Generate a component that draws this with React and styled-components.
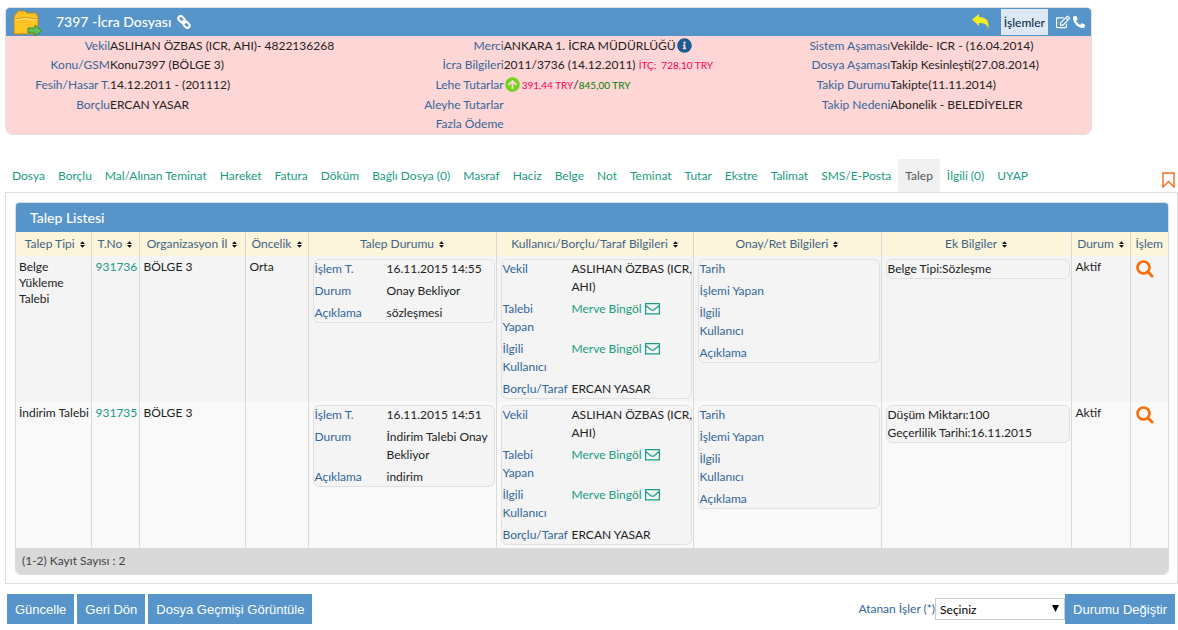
import styled, { createGlobalStyle } from "styled-components";
import { FaPhoneAlt, FaInfoCircle, FaArrowCircleUp, FaRegEdit } from "react-icons/fa";

const GlobalStyle = createGlobalStyle`
  * { box-sizing: border-box; }

  body {
    margin: 0;
    background: #fff;
    color: #222;
    font: 12px/18px Lato, "Noto Sans", sans-serif;
  }

  a {
    color: #1a9b82;
    text-decoration: none;
  }
`;

const Page = styled.div`
  padding: 7px 0 6px 5px;
`;

const CasePanel = styled.section`
  margin-right: 86px;
  border: 1px solid #e0e0e0;
  border-radius: 5px 5px 8px 8px;
  overflow: hidden;
  background: #ffd6d6;
`;

const CaseBar = styled.header`
  display: flex;
  align-items: center;
  height: 28px;
  padding: 0 6px;
  background: #5694ca;
  color: #fff;
`;

const CaseTitle = styled.h1`
  display: flex;
  align-items: center;
  gap: 6px;
  flex: 1;
  margin: 0 0 0 12px;
  font-size: 14px;
  font-weight: 500;
`;

const BarTools = styled.div`
  display: flex;
  align-items: center;
  gap: 3px;
`;

const IconButton = styled.button`
  display: flex;
  padding: 0;
  border: 0;
  background: none;
  color: #fff;
  cursor: pointer;
`;

const MenuButton = styled.button`
  height: 26px;
  margin: 0 5px 0 8px;
  padding: 0 3px;
  border: 0;
  background: #dce9f5;
  color: #12344f;
  font: 500 12px Lato, "Noto Sans", sans-serif;
`;

const CaseInfo = styled.div`
  display: grid;
  grid-template-columns: 394fr 387fr 305fr;
  min-height: 98px;
`;

const InfoList = styled.dl`
  display: grid;
  grid-template-columns: 104px 1fr;
  grid-template-rows: repeat(5, 1fr);
  align-items: center;
  margin: 0;
  white-space: nowrap;

  dt {
    color: #336699;
    text-align: right;
  }

  dd {
    display: flex;
    align-items: center;
    margin: 0;
  }

  svg { margin: 0 2px 0 1px; }
`;

const Amount = styled.span`
  color: ${({ $plus }) => ($plus ? "#008000" : "#ff0055")};
  font-size: 10px;
`;

const TabBar = styled.nav`
  display: flex;
  align-items: flex-end;
  justify-content: space-between;
  margin-top: 24px;
`;

const Tabs = styled.div`
  display: flex;
  gap: 1px;
  padding-left: 1px;
`;

const Tab = styled.a`
  padding: 8px ${({ $active }) => ($active ? 7 : 6)}px 7px;
  white-space: nowrap;
  ${({ $active }) => $active && "background: #f0f0f0; color: #555;"}
`;

const Bookmark = styled(IconButton)`
  margin: 0 3px 4px 0;
`;

const Content = styled.main`
  padding: 9px 8px 8px 9px;
  border: 1px solid #ddd;
`;

const ListPanel = styled.section`
  border: 1px solid #ddd;
  border-radius: 4px 4px 6px 6px;
  overflow: hidden;
`;

const ListTitle = styled.h2`
  margin: 0;
  padding: 0 14px;
  background: #5694ca;
  color: #fff;
  font-size: 14px;
  font-weight: 500;
  line-height: 29px;
`;

const Table = styled.table`
  width: 100%;
  table-layout: fixed;
  border-collapse: collapse;

  th, td {
    padding: 3px 1px 3px 4px;
    border-left: 1px solid #d9d9d9;
    vertical-align: top;
  }

  th {
    padding-left: 1px;
    background: #fcf5dc;
    color: #3f6484;
    font-weight: 400;
    text-align: center;
    white-space: nowrap;

    svg { margin-left: 2px; }
  }

  td { line-height: 16px; }

  th:first-child, td:first-child {
    padding-left: 3px;
    padding-right: 0;
    border-left: 0;
  }

  tbody tr:nth-child(odd) { background: #f4f4f4; }
  tbody tr:nth-child(even) { background: #f9f9f9; }
`;

const Count = styled.footer`
  padding: 4px 6px;
  background: #d9d9d9;
  color: #444;
`;

const Box = styled.div`
  display: grid;
  row-gap: 4px;
  padding: 0 1px;
  border: 1px solid #e0e0e0;
  border-radius: 6px;
  background: #f4f4f4;
  line-height: 18px;
`;

const Pair = styled.div`
  display: grid;
  grid-template-columns: ${({ $label }) => $label}px 1fr;
  white-space: pre;

  & > span:first-child { color: #336699; }
`;

const MailLink = styled.a`
  display: flex;
  align-items: center;
  gap: 3px;
  height: 18px;
`;

const Actions = styled.footer`
  display: flex;
  align-items: center;
  gap: 3px;
  padding: 10px 3px 0 2px;
`;

const Button = styled.button`
  height: 30px;
  padding: 0 8px;
  border: 0;
  background: #5694ca;
  color: #fff;
  font: 13px "Liberation Sans", Arial, sans-serif;
  white-space: nowrap;
`;

const Assign = styled.div`
  display: flex;
  align-items: center;
  margin-left: auto;

  label { color: #336699; }
`;

const SelectBox = styled.span`
  display: grid;
  align-items: center;

  select, svg { grid-area: 1 / 1; }

  svg {
    justify-self: end;
    margin-right: 6px;
    pointer-events: none;
  }

  select {
    width: 130px;
    height: 22px;
    padding: 0 4px;
    border: 1px solid #ccc;
    background: #fff;
    color: #000;
    font: 12px Lato, "Noto Sans", sans-serif;
    appearance: none;
  }
`;

const tabs = [
  "Dosya", "Borçlu", "Mal/Alınan Teminat", "Hareket", "Fatura", "Döküm", "Bağlı Dosya (0)",
  "Masraf", "Haciz", "Belge", "Not", "Teminat", "Tutar", "Ekstre", "Talimat", "SMS/E-Posta",
  "Talep", "İlgili (0)", "UYAP",
];

const columns = [
  ["Talep Tipi", 75], ["T.No", 48], ["Organizasyon İl", 106], ["Öncelik", 63],
  ["Talep Durumu", 188], ["Kullanıcı/Borçlu/Taraf Bilgileri", 197], ["Onay/Ret Bilgileri", 188],
  ["Ek Bilgiler", 190], ["Durum", 59], ["İşlem", 38],
];

const requests = [
  {
    no: "931736", type: "Belge Yükleme Talebi", region: "BÖLGE 3", priority: "Orta",
    date: "16.11.2015 14:55", status: "Onay Bekliyor", note: "sözleşmesi",
    extra: ["Belge Tipi:Sözleşme"],
  },
  {
    no: "931735", type: "İndirim Talebi", region: "BÖLGE 3", priority: "",
    date: "16.11.2015 14:51", status: "İndirim Talebi Onay\nBekliyor", note: "indirim",
    extra: ["Düşüm Miktarı:100", "Geçerlilik Tarihi:16.11.2015"],
  },
];

function FolderIcon() {
  return (
    <svg width="32" height="28" viewBox="0 0 32 28" aria-hidden="true">
      <path d="M2 26V9l2-4h1l1-2h7l2 2h9l2 4v17z" fill="#ffc423" stroke="#b98a1c" />
      <path d="M3 11q11-3 22 0" fill="none" stroke="#c9971f" />
      <path d="M3 12q11-3 22 0" fill="none" stroke="#ffe58a" />
      <path d="M16 20h7v-3l7 6-7 5v-3h-7z" fill="#63c058" stroke="#2f8c36" />
    </svg>
  );
}

function ChainIcon() {
  return (
    <svg width="14" height="14" viewBox="0 0 14 14" fill="none" stroke="#fff" strokeWidth="2" aria-hidden="true">
      <rect x="1" y="2" width="7" height="4.600" rx="2.300" transform="rotate(45 4.500 4.300)" />
      <rect x="6" y="7.400" width="7" height="4.600" rx="2.300" transform="rotate(45 9.500 9.700)" />
      <path d="M5.500 5.500l3 3" />
    </svg>
  );
}

function ReplyIcon() {
  return (
    <svg width="18" height="16" viewBox="0 0 18 16" aria-hidden="true">
      <path d="M0 5.500L7 0v3c7 0 11 4 9 12-.5-4-3-6-9-6v3z" fill="#f0ee1c" />
    </svg>
  );
}

function BookmarkIcon() {
  return (
    <svg width="13" height="16" viewBox="0 0 13 16" aria-hidden="true">
      <path d="M1 1h11v14l-5.500-5.500L1 15z" fill="none" stroke="#f76b1c" strokeWidth="1.400" />
    </svg>
  );
}

function MailIcon() {
  return (
    <svg width="15" height="12" viewBox="0 0 15 12" aria-hidden="true">
      <path d="M.6.6h13.800v10.300H.6zM.6 2.500l5.400 4.200q1.500 1 3 0l5.400-4.200" fill="none" stroke="#1a9b82" strokeWidth="1.200" />
    </svg>
  );
}

function SearchIcon() {
  return (
    <svg width="19" height="19" viewBox="0 0 19 19" aria-hidden="true">
      <circle cx="8.500" cy="8.500" r="6" fill="none" stroke="#f96d0b" strokeWidth="2.600" />
      <path d="M13 13l4 4" stroke="#f96d0b" strokeWidth="3" strokeLinecap="round" />
    </svg>
  );
}

function SortIcon() {
  return (
    <svg width="5" height="7" viewBox="0 0 6 8" aria-hidden="true">
      <path d="M0 3.500L3 0l3 3.500zM0 4.500h6L3 8z" fill="#111" />
    </svg>
  );
}

function Person() {
  return <MailLink href="#mail">Merve Bingöl<MailIcon /></MailLink>;
}

function Pairs({ label, items }) {
  return (
    <Box>
      {items.map(([name, value]) => (
        <Pair key={name} $label={label}>
          <span>{name}</span>
          <span>{value}</span>
        </Pair>
      ))}
    </Box>
  );
}

function Info({ items }) {
  return (
    <InfoList>
      {items.map(([name, value]) => [
        <dt key={name}>{name}</dt>,
        <dd key={name + "-value"}>{value}</dd>,
      ])}
    </InfoList>
  );
}

function Row({ item }) {
  return (
    <tr>
      <td>{item.type}</td>
      <td><a href={"#" + item.no}>{item.no}</a></td>
      <td>{item.region}</td>
      <td>{item.priority}</td>
      <td>
        <Pairs label={72} items={[["İşlem T.", item.date], ["Durum", item.status], ["Açıklama", item.note]]} />
      </td>
      <td>
        <Pairs
          label={69}
          items={[
            ["Vekil", "ASLIHAN ÖZBAS (ICR,\nAHI)"],
            ["Talebi\nYapan", <Person />],
            ["İlgili\nKullanıcı", <Person />],
            ["Borçlu/Taraf", "ERCAN YASAR"],
          ]}
        />
      </td>
      <td>
        <Pairs label={72} items={[["Tarih"], ["İşlemi Yapan"], ["İlgili\nKullanıcı"], ["Açıklama"]]} />
      </td>
      <td>
        <Box><div>{item.extra.map((line) => <div key={line}>{line}</div>)}</div></Box>
      </td>
      <td>Aktif</td>
      <td><IconButton aria-label="Detay"><SearchIcon /></IconButton></td>
    </tr>
  );
}

export default function App() {
  return (
    <Page>
      <GlobalStyle />
      <CasePanel>
        <CaseBar>
          <FolderIcon />
          <CaseTitle>7397 -İcra Dosyası <ChainIcon /></CaseTitle>
          <BarTools>
            <IconButton aria-label="Geri"><ReplyIcon /></IconButton>
            <MenuButton>İşlemler</MenuButton>
            <IconButton aria-label="Düzenle"><FaRegEdit size={14} /></IconButton>
            <IconButton aria-label="Ara"><FaPhoneAlt size={12} /></IconButton>
          </BarTools>
        </CaseBar>
        <CaseInfo>
          <Info
            items={[
              ["Vekil", "ASLIHAN ÖZBAS (ICR, AHI)- 4822136268"],
              ["Konu/GSM", "Konu7397 (BÖLGE 3)"],
              ["Fesih/Hasar T.", "14.12.2011 - (201112)"],
              ["Borçlu", "ERCAN YASAR"],
            ]}
          />
          <Info
            items={[
              ["Merci", <>ANKARA 1. İCRA MÜDÜRLÜĞÜ<FaInfoCircle size={15} color="#1c5c92" /></>],
              ["İcra Bilgileri", <>2011/3736 (14.12.2011)&nbsp;<Amount>İTÇ: &nbsp;728,10 TRY</Amount></>],
              ["Lehe Tutarlar", <><FaArrowCircleUp size={15} color="#6fd41a" /><Amount>391,44 TRY</Amount>/<Amount $plus>845,00 TRY</Amount></>],
              ["Aleyhe Tutarlar", ""],
              ["Fazla Ödeme", ""],
            ]}
          />
          <Info
            items={[
              ["Sistem Aşaması", "Vekilde- ICR - (16.04.2014)"],
              ["Dosya Aşaması", "Takip Kesinleşti(27.08.2014)"],
              ["Takip Durumu", "Takipte(11.11.2014)"],
              ["Takip Nedeni", "Abonelik - BELEDİYELER"],
            ]}
          />
        </CaseInfo>
      </CasePanel>

      <TabBar>
        <Tabs>
          {tabs.map((name) => (
            <Tab key={name} href="#tab" $active={name === "Talep"}>{name}</Tab>
          ))}
        </Tabs>
        <Bookmark aria-label="İşaretle"><BookmarkIcon /></Bookmark>
      </TabBar>

      <Content>
        <ListPanel>
          <ListTitle>Talep Listesi</ListTitle>
          <Table>
            <colgroup>
              {columns.map(([name, width]) => <col key={name} width={width} />)}
            </colgroup>
            <thead>
              <tr>
                {columns.map(([name]) => (
                  <th key={name}>{name} {name !== "İşlem" && <SortIcon />}</th>
                ))}
              </tr>
            </thead>
            <tbody>
              {requests.map((item) => <Row key={item.no} item={item} />)}
            </tbody>
          </Table>
          <Count>(1-2) Kayıt Sayısı : 2</Count>
        </ListPanel>
      </Content>

      <Actions>
        <Button>Güncelle</Button>
        <Button>Geri Dön</Button>
        <Button>Dosya Geçmişi Görüntüle</Button>
        <Assign>
          <label htmlFor="assigned">Atanan İşler (*)</label>
          <SelectBox>
            <select id="assigned"><option>Seçiniz</option></select>
            <svg width="7" height="8" viewBox="0 0 7 8" aria-hidden="true"><path d="M0 0h7L3.500 7z" /></svg>
          </SelectBox>
          <Button>Durumu Değiştir</Button>
        </Assign>
      </Actions>
    </Page>
  );
}
